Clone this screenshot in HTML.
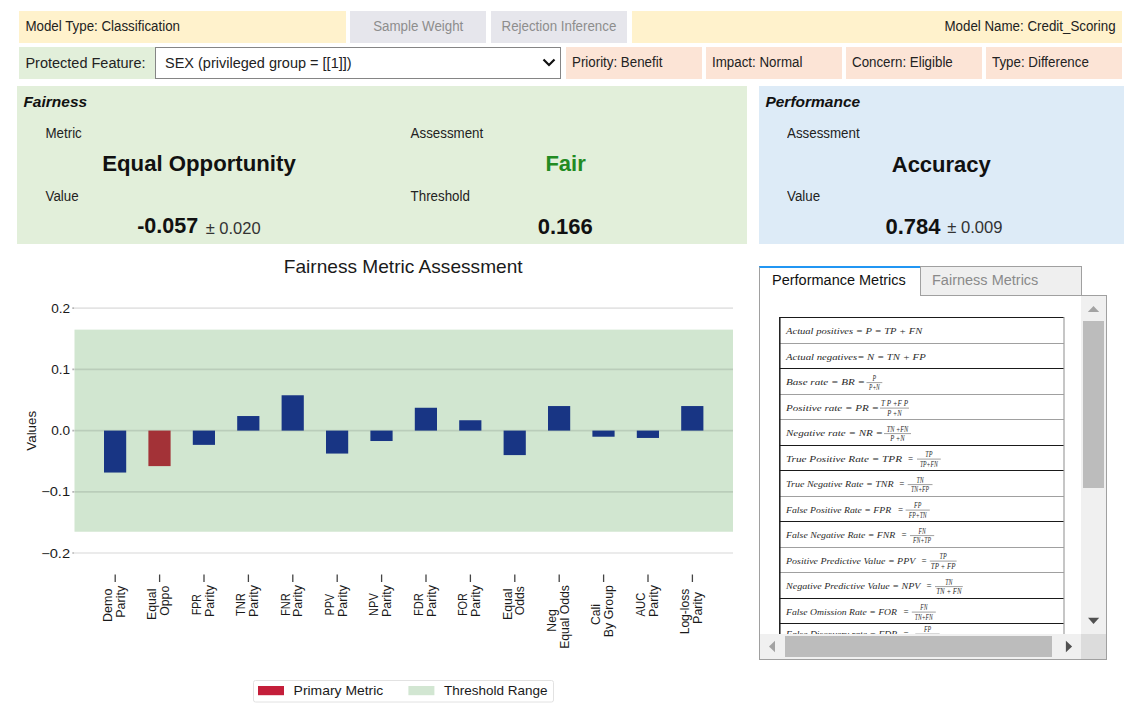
<!DOCTYPE html>
<html><head><meta charset="utf-8"><style>
*{box-sizing:border-box}
html,body{margin:0;padding:0}
body{width:1144px;height:706px;position:relative;overflow:hidden;background:#fff;font-family:"Liberation Sans",sans-serif;color:#222}
.a{position:absolute}
.t{position:absolute;white-space:nowrap;line-height:1}
</style></head><body>

<div class="a" style="left:19px;top:11px;width:327px;height:32px;background:#fff2cc;"></div>
<div class="a" style="left:350px;top:11px;width:136px;height:32px;background:#e6e6ec;"></div>
<div class="a" style="left:491px;top:11px;width:136px;height:32px;background:#e6e6ec;"></div>
<div class="a" style="left:632px;top:11px;width:490px;height:32px;background:#fff2cc;"></div>
<div class="t" style="left:25.40px;top:19.61px;font-size:13.333px;;transform:scaleY(1.1);transform-origin:50% 11.29px;">Model Type: Classification</div>
<div class="t" style="left:373.20px;top:19.61px;font-size:13.333px;color:#8d8d8d;transform:scaleY(1.1);transform-origin:50% 11.29px;">Sample Weight</div>
<div class="t" style="left:501.50px;top:19.61px;font-size:13.333px;color:#8d8d8d;transform:scaleY(1.1);transform-origin:50% 11.29px;">Rejection Inference</div>
<div class="t" style="left:515.60px;width:600px;text-align:right;top:19.61px;font-size:13.333px;;transform:scaleY(1.1);transform-origin:50% 11.29px;">Model Name: Credit_Scoring</div>
<div class="a" style="left:19px;top:47px;width:136px;height:32px;background:#e2efda;"></div>
<div class="a" style="left:155px;top:47px;width:406px;height:32px;background:#fff;border:1px solid #858585"></div>
<div class="t" style="left:25.40px;top:55.93px;font-size:14.5px;;transform:scaleY(1.05);transform-origin:50% 12.27px;">Protected Feature:</div>
<div class="t" style="left:165.00px;top:55.93px;font-size:14.5px;;transform:scaleY(1.05);transform-origin:50% 12.27px;">SEX (privileged group = [[1]])</div>
<svg class="a" style="left:540px;top:55px" width="18" height="16" viewBox="0 0 18 16"><path d="M3.5 4.5 L9 10 L14.5 4.5" fill="none" stroke="#111" stroke-width="2.2"/></svg>
<div class="a" style="left:566px;top:47px;width:136px;height:32px;background:#fce4d6;"></div>
<div class="t" style="left:572.00px;top:56.11px;font-size:13.333px;;transform:scaleY(1.1);transform-origin:50% 11.29px;">Priority: Benefit</div>
<div class="a" style="left:706px;top:47px;width:136px;height:32px;background:#fce4d6;"></div>
<div class="t" style="left:712.00px;top:56.11px;font-size:13.333px;;transform:scaleY(1.1);transform-origin:50% 11.29px;">Impact: Normal</div>
<div class="a" style="left:846px;top:47px;width:136px;height:32px;background:#fce4d6;"></div>
<div class="t" style="left:852.00px;top:56.11px;font-size:13.333px;;transform:scaleY(1.1);transform-origin:50% 11.29px;">Concern: Eligible</div>
<div class="a" style="left:986px;top:47px;width:136px;height:32px;background:#fce4d6;"></div>
<div class="t" style="left:992.00px;top:56.11px;font-size:13.333px;;transform:scaleY(1.1);transform-origin:50% 11.29px;">Type: Difference</div>
<div class="a" style="left:17px;top:86px;width:730px;height:158px;background:#e2efda;"></div>
<div class="a" style="left:759px;top:86px;width:365px;height:158px;background:#ddebf7;"></div>
<div class="t" style="left:23.40px;top:93.88px;font-size:15.5px;font-weight:bold;font-style:italic;color:#111">Fairness</div>
<div class="t" style="left:765.40px;top:93.88px;font-size:15.5px;font-weight:bold;font-style:italic;color:#111">Performance</div>
<div class="t" style="left:45.50px;top:126.61px;font-size:13.333px;;transform:scaleY(1.1);transform-origin:50% 11.29px;">Metric</div>
<div class="t" style="left:410.60px;top:126.61px;font-size:13.333px;;transform:scaleY(1.1);transform-origin:50% 11.29px;">Assessment</div>
<div class="t" style="left:787.00px;top:126.61px;font-size:13.333px;;transform:scaleY(1.1);transform-origin:50% 11.29px;">Assessment</div>
<div class="t" style="left:45.50px;top:189.61px;font-size:13.333px;;transform:scaleY(1.1);transform-origin:50% 11.29px;">Value</div>
<div class="t" style="left:410.60px;top:189.61px;font-size:13.333px;;transform:scaleY(1.1);transform-origin:50% 11.29px;">Threshold</div>
<div class="t" style="left:787.00px;top:189.61px;font-size:13.333px;;transform:scaleY(1.1);transform-origin:50% 11.29px;">Value</div>
<div class="t" style="left:-101.00px;width:600px;text-align:center;top:153.21px;font-size:22.2px;font-weight:bold;color:#111">Equal Opportunity</div>
<div class="t" style="left:265.60px;width:600px;text-align:center;top:153.18px;font-size:22px;font-weight:bold;color:#228b22">Fair</div>
<div class="t" style="left:641.30px;width:600px;text-align:center;top:153.58px;font-size:22px;font-weight:bold;color:#111">Accuracy</div>
<div class="t" style="left:137.20px;top:216.40px;font-size:21.5px;font-weight:bold;color:#111">-0.057</div>
<div class="t" style="left:205.70px;top:220.43px;font-size:16.5px;color:#333">± 0.020</div>
<div class="t" style="left:265.20px;width:600px;text-align:center;top:215.78px;font-size:22px;font-weight:bold;color:#111">0.166</div>
<div class="t" style="left:885.50px;top:215.78px;font-size:22px;font-weight:bold;color:#111">0.784</div>
<div class="t" style="left:947.30px;top:220.35px;font-size:16.6px;color:#333">± 0.009</div>
<svg class="a" style="left:0;top:0" width="1144" height="706" viewBox="0 0 1144 706" font-family="Liberation Sans, sans-serif"><rect x="74.5" y="329.64" width="658.5" height="202.10" fill="#d1e6d0"/><line x1="73" x2="733" y1="308.15" y2="308.15" stroke="#000" stroke-opacity="0.105" stroke-width="1.6"/><line x1="72" x2="74" y1="308.15" y2="308.15" stroke="#000" stroke-opacity="0.2" stroke-width="1.6"/><line x1="73" x2="733" y1="369.38" y2="369.38" stroke="#000" stroke-opacity="0.105" stroke-width="1.6"/><line x1="72" x2="74" y1="369.38" y2="369.38" stroke="#000" stroke-opacity="0.2" stroke-width="1.6"/><line x1="73" x2="733" y1="430.60" y2="430.60" stroke="#000" stroke-opacity="0.105" stroke-width="1.6"/><line x1="72" x2="74" y1="430.60" y2="430.60" stroke="#000" stroke-opacity="0.2" stroke-width="1.6"/><line x1="73" x2="733" y1="491.83" y2="491.83" stroke="#000" stroke-opacity="0.105" stroke-width="1.6"/><line x1="72" x2="74" y1="491.83" y2="491.83" stroke="#000" stroke-opacity="0.2" stroke-width="1.6"/><line x1="73" x2="733" y1="553.05" y2="553.05" stroke="#000" stroke-opacity="0.105" stroke-width="1.6"/><line x1="72" x2="74" y1="553.05" y2="553.05" stroke="#000" stroke-opacity="0.2" stroke-width="1.6"/><rect x="104.00" y="430.60" width="22.2" height="41.94" fill="#183584"/><rect x="148.40" y="430.60" width="22.2" height="35.51" fill="#a33237"/><rect x="192.80" y="430.60" width="22.2" height="14.27" fill="#183584"/><rect x="237.20" y="416.03" width="22.2" height="14.57" fill="#183584"/><rect x="281.60" y="395.27" width="22.2" height="35.33" fill="#183584"/><rect x="326.00" y="430.60" width="22.2" height="22.96" fill="#183584"/><rect x="370.40" y="430.60" width="22.2" height="10.41" fill="#183584"/><rect x="414.80" y="407.76" width="22.2" height="22.84" fill="#183584"/><rect x="459.20" y="420.25" width="22.2" height="10.35" fill="#183584"/><rect x="503.60" y="430.60" width="22.2" height="24.49" fill="#183584"/><rect x="548.00" y="406.05" width="22.2" height="24.55" fill="#183584"/><rect x="592.40" y="430.60" width="22.2" height="6.12" fill="#183584"/><rect x="636.80" y="430.60" width="22.2" height="7.35" fill="#183584"/><rect x="681.20" y="406.05" width="22.2" height="24.55" fill="#183584"/><text x="70.1" y="312.75" text-anchor="end" font-size="12.4" textLength="18.9" lengthAdjust="spacingAndGlyphs" fill="#1a1a1a">0.2</text><text x="70.1" y="373.98" text-anchor="end" font-size="12.4" textLength="18.9" lengthAdjust="spacingAndGlyphs" fill="#1a1a1a">0.1</text><text x="70.1" y="435.20" text-anchor="end" font-size="12.4" textLength="18.9" lengthAdjust="spacingAndGlyphs" fill="#1a1a1a">0.0</text><text x="70.1" y="496.43" text-anchor="end" font-size="12.4" textLength="28.9" lengthAdjust="spacingAndGlyphs" fill="#1a1a1a">−0.1</text><text x="70.1" y="557.65" text-anchor="end" font-size="12.4" textLength="28.9" lengthAdjust="spacingAndGlyphs" fill="#1a1a1a">−0.2</text><text transform="translate(36.1,430.8) rotate(-90)" text-anchor="middle" font-size="12.6" textLength="39.9" lengthAdjust="spacingAndGlyphs" fill="#1a1a1a">Values</text><text x="403.2" y="272.6" text-anchor="middle" font-size="17.9" textLength="238.8" lengthAdjust="spacingAndGlyphs" fill="#1a1a1a">Fairness Metric Assessment</text><line x1="115.20" x2="115.20" y1="574.5" y2="582" stroke="#444" stroke-width="1.3"/><text transform="translate(111.90,605.29) rotate(-90)" text-anchor="middle" font-size="12" textLength="33.3" lengthAdjust="spacingAndGlyphs" fill="#1a1a1a">Demo</text><text transform="translate(124.70,601.79) rotate(-90)" text-anchor="middle" font-size="12" textLength="31.9" lengthAdjust="spacingAndGlyphs" fill="#1a1a1a">Parity</text><line x1="159.60" x2="159.60" y1="574.5" y2="582" stroke="#444" stroke-width="1.3"/><text transform="translate(156.30,604.28) rotate(-90)" text-anchor="middle" font-size="12" textLength="31.3" lengthAdjust="spacingAndGlyphs" fill="#1a1a1a">Equal</text><text transform="translate(169.10,600.78) rotate(-90)" text-anchor="middle" font-size="12" textLength="29.9" lengthAdjust="spacingAndGlyphs" fill="#1a1a1a">Oppo</text><line x1="204.00" x2="204.00" y1="574.5" y2="582" stroke="#444" stroke-width="1.3"/><text transform="translate(200.70,604.58) rotate(-90)" text-anchor="middle" font-size="12" textLength="21.0" lengthAdjust="spacingAndGlyphs" fill="#1a1a1a">FPR</text><text transform="translate(213.50,601.08) rotate(-90)" text-anchor="middle" font-size="12" textLength="31.9" lengthAdjust="spacingAndGlyphs" fill="#1a1a1a">Parity</text><line x1="248.40" x2="248.40" y1="574.5" y2="582" stroke="#444" stroke-width="1.3"/><text transform="translate(245.10,604.58) rotate(-90)" text-anchor="middle" font-size="12" textLength="23.0" lengthAdjust="spacingAndGlyphs" fill="#1a1a1a">TNR</text><text transform="translate(257.90,601.08) rotate(-90)" text-anchor="middle" font-size="12" textLength="31.9" lengthAdjust="spacingAndGlyphs" fill="#1a1a1a">Parity</text><line x1="292.80" x2="292.80" y1="574.5" y2="582" stroke="#444" stroke-width="1.3"/><text transform="translate(289.50,604.58) rotate(-90)" text-anchor="middle" font-size="12" textLength="22.6" lengthAdjust="spacingAndGlyphs" fill="#1a1a1a">FNR</text><text transform="translate(302.30,601.08) rotate(-90)" text-anchor="middle" font-size="12" textLength="31.9" lengthAdjust="spacingAndGlyphs" fill="#1a1a1a">Parity</text><line x1="337.20" x2="337.20" y1="574.5" y2="582" stroke="#444" stroke-width="1.3"/><text transform="translate(333.90,604.58) rotate(-90)" text-anchor="middle" font-size="12" textLength="21.2" lengthAdjust="spacingAndGlyphs" fill="#1a1a1a">PPV</text><text transform="translate(346.70,601.08) rotate(-90)" text-anchor="middle" font-size="12" textLength="31.9" lengthAdjust="spacingAndGlyphs" fill="#1a1a1a">Parity</text><line x1="381.60" x2="381.60" y1="574.5" y2="582" stroke="#444" stroke-width="1.3"/><text transform="translate(378.30,604.58) rotate(-90)" text-anchor="middle" font-size="12" textLength="22.8" lengthAdjust="spacingAndGlyphs" fill="#1a1a1a">NPV</text><text transform="translate(391.10,601.08) rotate(-90)" text-anchor="middle" font-size="12" textLength="31.9" lengthAdjust="spacingAndGlyphs" fill="#1a1a1a">Parity</text><line x1="426.00" x2="426.00" y1="574.5" y2="582" stroke="#444" stroke-width="1.3"/><text transform="translate(422.70,604.58) rotate(-90)" text-anchor="middle" font-size="12" textLength="22.9" lengthAdjust="spacingAndGlyphs" fill="#1a1a1a">FDR</text><text transform="translate(435.50,601.08) rotate(-90)" text-anchor="middle" font-size="12" textLength="31.9" lengthAdjust="spacingAndGlyphs" fill="#1a1a1a">Parity</text><line x1="470.40" x2="470.40" y1="574.5" y2="582" stroke="#444" stroke-width="1.3"/><text transform="translate(467.10,604.58) rotate(-90)" text-anchor="middle" font-size="12" textLength="23.0" lengthAdjust="spacingAndGlyphs" fill="#1a1a1a">FOR</text><text transform="translate(479.90,601.08) rotate(-90)" text-anchor="middle" font-size="12" textLength="31.9" lengthAdjust="spacingAndGlyphs" fill="#1a1a1a">Parity</text><line x1="514.80" x2="514.80" y1="574.5" y2="582" stroke="#444" stroke-width="1.3"/><text transform="translate(511.50,604.28) rotate(-90)" text-anchor="middle" font-size="12" textLength="31.3" lengthAdjust="spacingAndGlyphs" fill="#1a1a1a">Equal</text><text transform="translate(524.30,600.78) rotate(-90)" text-anchor="middle" font-size="12" textLength="28.9" lengthAdjust="spacingAndGlyphs" fill="#1a1a1a">Odds</text><line x1="559.20" x2="559.20" y1="574.5" y2="582" stroke="#444" stroke-width="1.3"/><text transform="translate(555.90,620.50) rotate(-90)" text-anchor="middle" font-size="12" textLength="22.4" lengthAdjust="spacingAndGlyphs" fill="#1a1a1a">Neg</text><text transform="translate(568.70,617.00) rotate(-90)" text-anchor="middle" font-size="12" textLength="63.7" lengthAdjust="spacingAndGlyphs" fill="#1a1a1a">Equal Odds</text><line x1="603.60" x2="603.60" y1="574.5" y2="582" stroke="#444" stroke-width="1.3"/><text transform="translate(600.30,614.64) rotate(-90)" text-anchor="middle" font-size="12" textLength="20.9" lengthAdjust="spacingAndGlyphs" fill="#1a1a1a">Cali</text><text transform="translate(613.10,611.14) rotate(-90)" text-anchor="middle" font-size="12" textLength="52.0" lengthAdjust="spacingAndGlyphs" fill="#1a1a1a">By Group</text><line x1="648.00" x2="648.00" y1="574.5" y2="582" stroke="#444" stroke-width="1.3"/><text transform="translate(644.70,604.58) rotate(-90)" text-anchor="middle" font-size="12" textLength="23.7" lengthAdjust="spacingAndGlyphs" fill="#1a1a1a">AUC</text><text transform="translate(657.50,601.08) rotate(-90)" text-anchor="middle" font-size="12" textLength="31.9" lengthAdjust="spacingAndGlyphs" fill="#1a1a1a">Parity</text><line x1="692.40" x2="692.40" y1="574.5" y2="582" stroke="#444" stroke-width="1.3"/><text transform="translate(689.10,611.49) rotate(-90)" text-anchor="middle" font-size="12" textLength="45.7" lengthAdjust="spacingAndGlyphs" fill="#1a1a1a">Log-loss</text><text transform="translate(701.90,607.99) rotate(-90)" text-anchor="middle" font-size="12" textLength="31.9" lengthAdjust="spacingAndGlyphs" fill="#1a1a1a">Parity</text><rect x="253.5" y="680.5" width="300" height="21.5" rx="2" fill="#fff" stroke="#e2e2e2" stroke-width="1"/><rect x="258" y="686" width="26" height="9.2" fill="#c41e3a"/><text x="293.6" y="695" font-size="12.7" textLength="89.7" lengthAdjust="spacingAndGlyphs" fill="#1a1a1a">Primary Metric</text><rect x="408.4" y="686" width="26" height="9.2" fill="#d2e6d2"/><text x="444" y="695" font-size="12.7" textLength="103.5" lengthAdjust="spacingAndGlyphs" fill="#1a1a1a">Threshold Range</text></svg>
<div class="a" style="left:759px;top:295px;width:348px;height:365px;border:1px solid #a0a0a0;border-top:none;background:#fff"></div>
<div class="a" style="left:1081px;top:295px;width:26px;height:1px;background:#a0a0a0"></div>
<div class="a" style="left:759px;top:266px;width:162px;height:30px;background:#fff;border-left:1px solid #a0a0a0;border-top:2px solid #2196f3"></div>
<div class="t" style="left:772.00px;top:272.53px;font-size:14.5px;color:#111;transform:scaleY(1.05);transform-origin:50% 12.27px;">Performance Metrics</div>
<div class="a" style="left:920px;top:266px;width:162px;height:30px;background:#efefef;border:1px solid #a0a0a0"></div>
<div class="t" style="left:932.00px;top:272.53px;font-size:14.5px;color:#8a8a8a;transform:scaleY(1.05);transform-origin:50% 12.27px;">Fairness Metrics</div>
<svg class="a" style="left:760px;top:296px;overflow:hidden" width="321" height="338" font-family="Liberation Serif, serif" font-style="italic" fill="#2a2a2a"><line x1="19.799999999999955" x2="304.0" y1="21.50" y2="21.50" stroke="#1a1a1a" stroke-width="1"/><text x="26.0" y="38.20" font-size="9.2" textLength="136.2" lengthAdjust="spacingAndGlyphs">Actual positives = P = TP + FN</text><line x1="19.799999999999955" x2="304.0" y1="47.50" y2="47.50" stroke="#a0a0a0" stroke-width="1"/><text x="26.0" y="63.70" font-size="9.2" textLength="139.7" lengthAdjust="spacingAndGlyphs">Actual negatives= N = TN + FP</text><line x1="19.799999999999955" x2="304.0" y1="72.50" y2="72.50" stroke="#1a1a1a" stroke-width="1"/><text x="26.0" y="89.20" font-size="9.2" textLength="79.0" lengthAdjust="spacingAndGlyphs">Base rate = BR =</text><line x1="106.50" x2="122.30" y1="86.60" y2="86.60" stroke="#777" stroke-width="0.7"/><text x="114.40" y="84.70" font-size="8" text-anchor="middle" textLength="3.6" lengthAdjust="spacingAndGlyphs">P</text><text x="114.40" y="94.20" font-size="8" text-anchor="middle" textLength="10.8" lengthAdjust="spacingAndGlyphs">P+N</text><line x1="19.799999999999955" x2="304.0" y1="98.50" y2="98.50" stroke="#a0a0a0" stroke-width="1"/><text x="26.0" y="114.70" font-size="9.2" textLength="93.0" lengthAdjust="spacingAndGlyphs">Positive rate = PR =</text><line x1="120.00" x2="149.00" y1="112.10" y2="112.10" stroke="#777" stroke-width="0.7"/><text x="134.50" y="110.20" font-size="8" text-anchor="middle" textLength="27.0" lengthAdjust="spacingAndGlyphs">T P +F P</text><text x="134.50" y="119.70" font-size="8" text-anchor="middle" textLength="14.4" lengthAdjust="spacingAndGlyphs">P +N</text><line x1="19.799999999999955" x2="304.0" y1="123.50" y2="123.50" stroke="#a0a0a0" stroke-width="1"/><text x="26.0" y="140.20" font-size="9.2" textLength="97.0" lengthAdjust="spacingAndGlyphs">Negative rate = NR =</text><line x1="124.00" x2="151.00" y1="137.60" y2="137.60" stroke="#777" stroke-width="0.7"/><text x="137.50" y="135.70" font-size="8" text-anchor="middle" textLength="21.6" lengthAdjust="spacingAndGlyphs">TN +FN</text><text x="137.50" y="145.20" font-size="8" text-anchor="middle" textLength="14.4" lengthAdjust="spacingAndGlyphs">P +N</text><line x1="19.799999999999955" x2="304.0" y1="149.50" y2="149.50" stroke="#1a1a1a" stroke-width="1"/><text x="26.0" y="165.70" font-size="9.2" textLength="116.0" lengthAdjust="spacingAndGlyphs">True Positive Rate = TPR</text><text x="147.39999999999998" y="165.70" font-size="9.6" textLength="6" lengthAdjust="spacingAndGlyphs">=</text><line x1="157.00" x2="180.80" y1="163.10" y2="163.10" stroke="#777" stroke-width="0.7"/><text x="168.90" y="161.20" font-size="8" text-anchor="middle" textLength="7.2" lengthAdjust="spacingAndGlyphs">TP</text><text x="168.90" y="170.70" font-size="8" text-anchor="middle" textLength="18.0" lengthAdjust="spacingAndGlyphs">TP+FN</text><line x1="19.799999999999955" x2="304.0" y1="174.50" y2="174.50" stroke="#1a1a1a" stroke-width="1"/><text x="26.0" y="191.20" font-size="9.2" textLength="107.6" lengthAdjust="spacingAndGlyphs">True Negative Rate = TNR</text><text x="138.79999999999995" y="191.20" font-size="9.6" textLength="6" lengthAdjust="spacingAndGlyphs">=</text><line x1="147.70" x2="172.50" y1="188.60" y2="188.60" stroke="#777" stroke-width="0.7"/><text x="160.10" y="186.70" font-size="8" text-anchor="middle" textLength="7.2" lengthAdjust="spacingAndGlyphs">TN</text><text x="160.10" y="196.20" font-size="8" text-anchor="middle" textLength="18.0" lengthAdjust="spacingAndGlyphs">TN+FP</text><line x1="19.799999999999955" x2="304.0" y1="200.50" y2="200.50" stroke="#a0a0a0" stroke-width="1"/><text x="26.0" y="216.70" font-size="9.2" textLength="105.2" lengthAdjust="spacingAndGlyphs">False Positive Rate = FPR</text><text x="137.39999999999998" y="216.70" font-size="9.6" textLength="6" lengthAdjust="spacingAndGlyphs">=</text><line x1="145.60" x2="169.80" y1="214.10" y2="214.10" stroke="#777" stroke-width="0.7"/><text x="157.70" y="212.20" font-size="8" text-anchor="middle" textLength="7.2" lengthAdjust="spacingAndGlyphs">FP</text><text x="157.70" y="221.70" font-size="8" text-anchor="middle" textLength="18.0" lengthAdjust="spacingAndGlyphs">FP+TN</text><line x1="19.799999999999955" x2="304.0" y1="225.50" y2="225.50" stroke="#1a1a1a" stroke-width="1"/><text x="26.0" y="242.20" font-size="9.2" textLength="109.3" lengthAdjust="spacingAndGlyphs">False Negative Rate = FNR</text><text x="141" y="242.20" font-size="9.6" textLength="6" lengthAdjust="spacingAndGlyphs">=</text><line x1="150.00" x2="174.20" y1="239.60" y2="239.60" stroke="#777" stroke-width="0.7"/><text x="162.10" y="237.70" font-size="8" text-anchor="middle" textLength="7.2" lengthAdjust="spacingAndGlyphs">FN</text><text x="162.10" y="247.20" font-size="8" text-anchor="middle" textLength="18.0" lengthAdjust="spacingAndGlyphs">FN+TP</text><line x1="19.799999999999955" x2="304.0" y1="251.50" y2="251.50" stroke="#a0a0a0" stroke-width="1"/><text x="26.0" y="267.70" font-size="9.2" textLength="129.3" lengthAdjust="spacingAndGlyphs">Positive Predictive Value = PPV</text><text x="161" y="267.70" font-size="9.6" textLength="6" lengthAdjust="spacingAndGlyphs">=</text><line x1="169.80" x2="196.60" y1="265.10" y2="265.10" stroke="#777" stroke-width="0.7"/><text x="183.20" y="263.20" font-size="8" text-anchor="middle" textLength="7.2" lengthAdjust="spacingAndGlyphs">TP</text><text x="183.20" y="272.70" font-size="8" text-anchor="middle" textLength="24.8" lengthAdjust="spacingAndGlyphs">TP + FP</text><line x1="19.799999999999955" x2="304.0" y1="276.50" y2="276.50" stroke="#a0a0a0" stroke-width="1"/><text x="26.0" y="293.20" font-size="9.2" textLength="134.5" lengthAdjust="spacingAndGlyphs">Negative Predictive Value = NPV</text><text x="166" y="293.20" font-size="9.6" textLength="6" lengthAdjust="spacingAndGlyphs">=</text><line x1="175.00" x2="202.80" y1="290.60" y2="290.60" stroke="#777" stroke-width="0.7"/><text x="188.90" y="288.70" font-size="8" text-anchor="middle" textLength="7.2" lengthAdjust="spacingAndGlyphs">TN</text><text x="188.90" y="298.20" font-size="8" text-anchor="middle" textLength="25.2" lengthAdjust="spacingAndGlyphs">TN + FN</text><line x1="19.799999999999955" x2="304.0" y1="302.50" y2="302.50" stroke="#1a1a1a" stroke-width="1"/><text x="26.0" y="318.70" font-size="9.2" textLength="111.0" lengthAdjust="spacingAndGlyphs">False Omission Rate = FOR</text><text x="143" y="318.70" font-size="9.6" textLength="6" lengthAdjust="spacingAndGlyphs">=</text><line x1="151.80" x2="175.80" y1="316.10" y2="316.10" stroke="#777" stroke-width="0.7"/><text x="163.80" y="314.20" font-size="8" text-anchor="middle" textLength="7.2" lengthAdjust="spacingAndGlyphs">FN</text><text x="163.80" y="323.70" font-size="8" text-anchor="middle" textLength="18.0" lengthAdjust="spacingAndGlyphs">TN+FN</text><line x1="19.799999999999955" x2="304.0" y1="327.50" y2="327.50" stroke="#1a1a1a" stroke-width="1"/><text x="26.0" y="340.70" font-size="9.2" textLength="111.2" lengthAdjust="spacingAndGlyphs">False Discovery rate = FDR</text><text x="143" y="340.70" font-size="9.6" textLength="6" lengthAdjust="spacingAndGlyphs">=</text><line x1="155.30" x2="179.70" y1="338.10" y2="338.10" stroke="#777" stroke-width="0.7"/><text x="167.50" y="336.20" font-size="8" text-anchor="middle" textLength="7.2" lengthAdjust="spacingAndGlyphs">FP</text><text x="167.50" y="345.70" font-size="8" text-anchor="middle" textLength="18.0" lengthAdjust="spacingAndGlyphs">FP+TN</text><line x1="19.799999999999955" x2="19.799999999999955" y1="21" y2="400" stroke="#1a1a1a" stroke-width="1.5"/><line x1="304.0" x2="304.0" y1="21" y2="400" stroke="#a0a0a0" stroke-width="1.2"/></svg>
<div class="a" style="left:1081px;top:296px;width:25px;height:338px;background:#f0f0f0"></div>
<div class="a" style="left:1083px;top:321px;width:21px;height:167px;background:#bcbcbc"></div>
<svg class="a" style="left:1081px;top:296px" width="25" height="338"><path d="M6.8 15.9 L12.5 10 L18.2 15.9Z" fill="#a3a3a3"/><path d="M7 321.8 L12.5 328 L18.2 321.8Z" fill="#505050"/></svg>
<div class="a" style="left:760px;top:634px;width:321px;height:25px;background:#f0f0f0"></div>
<div class="a" style="left:785px;top:636px;width:267px;height:21px;background:#bcbcbc"></div>
<div class="a" style="left:1081px;top:634px;width:25px;height:25px;background:#dcdcdc"></div>
<svg class="a" style="left:760px;top:634px" width="321" height="25"><path d="M15 6.8 L9 12.5 L15 18.2Z" fill="#a3a3a3"/><path d="M305.9 6.8 L312.1 12.5 L305.9 18.2Z" fill="#505050"/></svg>
</body></html>
